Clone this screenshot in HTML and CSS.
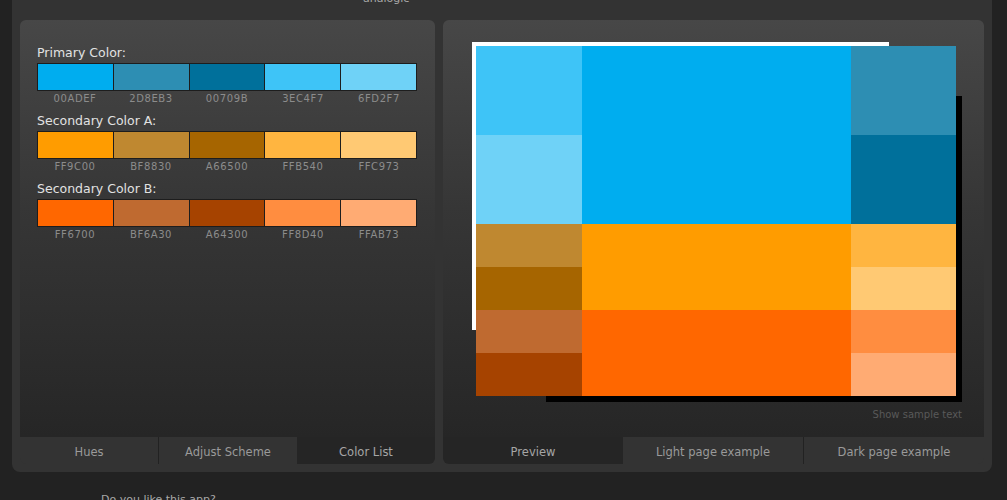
FILE: index.html
```html
<!DOCTYPE html>
<html>
<head>
<meta charset="utf-8">
<title>Color Scheme</title>
<link rel="stylesheet" href="styles.css">
</head>
<body>
<div class="app">
  <div class="top"><span class="scheme-name">analogic</span></div>
  <div class="panels">
    <section class="panel panel-left">
      <div class="panel-body list-body">
        <div class="group">
          <div class="group-label">Primary Color:</div>
          <div class="swatches">
            <div class="sw" style="background:#00ADEF"></div>
            <div class="sw" style="background:#2D8EB3"></div>
            <div class="sw" style="background:#00709B"></div>
            <div class="sw" style="background:#3EC4F7"></div>
            <div class="sw" style="background:#6FD2F7"></div>
          </div>
          <div class="codes"><span>00ADEF</span><span>2D8EB3</span><span>00709B</span><span>3EC4F7</span><span>6FD2F7</span></div>
        </div>
        <div class="group">
          <div class="group-label">Secondary Color A:</div>
          <div class="swatches">
            <div class="sw" style="background:#FF9C00"></div>
            <div class="sw" style="background:#BF8830"></div>
            <div class="sw" style="background:#A66500"></div>
            <div class="sw" style="background:#FFB540"></div>
            <div class="sw" style="background:#FFC973"></div>
          </div>
          <div class="codes"><span>FF9C00</span><span>BF8830</span><span>A66500</span><span>FFB540</span><span>FFC973</span></div>
        </div>
        <div class="group">
          <div class="group-label">Secondary Color B:</div>
          <div class="swatches">
            <div class="sw" style="background:#FF6700"></div>
            <div class="sw" style="background:#BF6A30"></div>
            <div class="sw" style="background:#A64300"></div>
            <div class="sw" style="background:#FF8D40"></div>
            <div class="sw" style="background:#FFAB73"></div>
          </div>
          <div class="codes"><span>FF6700</span><span>BF6A30</span><span>A64300</span><span>FF8D40</span><span>FFAB73</span></div>
        </div>
      </div>
      <div class="tabs">
        <div class="tab">Hues</div>
        <div class="tab tab-sep">Adjust Scheme</div>
        <div class="tab active">Color List</div>
      </div>
    </section>
    <section class="panel panel-right">
      <div class="panel-body preview-body">
        <div class="stage">
          <div class="grid">
            <div style="background:#3EC4F7"></div>
            <div class="big" style="background:#00ADEF"></div>
            <div style="background:#2D8EB3"></div>
            <div style="background:#6FD2F7"></div>
            <div style="background:#00709B"></div>
            <div style="background:#BF8830"></div>
            <div class="big" style="background:#FF9C00"></div>
            <div style="background:#FFB540"></div>
            <div style="background:#A66500"></div>
            <div style="background:#FFC973"></div>
            <div style="background:#BF6A30"></div>
            <div class="big" style="background:#FF6700"></div>
            <div style="background:#FF8D40"></div>
            <div style="background:#A64300"></div>
            <div style="background:#FFAB73"></div>
          </div>
        </div>
        <div class="sample-link">Show sample text</div>
      </div>
      <div class="tabs">
        <div class="tab active">Preview</div>
        <div class="tab">Light page example</div>
        <div class="tab tab-sep">Dark page example</div>
      </div>
    </section>
  </div>
</div>
<p class="footer-q">Do you like this app?</p>
</body>
</html>
```

FILE: styles.css
```css
html, body {
  margin: 0;
  padding: 0;
  background: #222222;
  font-family: "DejaVu Sans", Verdana, sans-serif;
  overflow: hidden;
}

.app {
  width: 964px;
  margin: -20px 0 0 12px;
  padding: 0 8px 8px 8px;
  background: #333333;
  border-radius: 0 0 8px 8px;
}

.top {
  height: 40px;
  box-sizing: border-box;
  padding: 12px 0 0 343px;
  font-size: 11px;
  line-height: 13px;
  color: #a8a8a8;
}

.panels {
  display: flex;
  gap: 8px;
}

.panel {
  display: flex;
  flex-direction: column;
  border-radius: 6px;
  overflow: hidden;
}

.panel-left { width: 415px; }
.panel-right { width: 541px; }

.panel-body {
  height: 417px;
  box-sizing: border-box;
  background: linear-gradient(to bottom, #474747 0%, #363636 45%, #262626 100%);
}

.list-body {
  padding: 25px 18px 0 17px;
}

.group {
  margin-bottom: 7px;
}

.group-label {
  font-size: 12.5px;
  line-height: 16px;
  color: #e2e2e2;
}

.swatches {
  display: flex;
  height: 28px;
  margin-top: 2px;
  border: 1px solid #1d1d1d;
  box-sizing: border-box;
}

.sw {
  flex: 1;
}

.sw + .sw {
  border-left: 1px solid #1d1d1d;
}

.codes {
  display: flex;
  margin-top: 1px;
  font-size: 10px;
  line-height: 14px;
  letter-spacing: 0.6px;
  color: #8c8c8c;
}

.codes span {
  flex: 1;
  text-align: center;
}

.tabs {
  display: flex;
  height: 27px;
  background: #333333;
}

.tab {
  flex: 1;
  box-sizing: border-box;
  height: 27px;
  padding-top: 3px;
  text-align: center;
  font-size: 11.5px;
  line-height: 24px;
  color: #9a9a9a;
}

.tab-sep {
  border-left: 1px solid #222222;
}

.tab.active {
  background: #252525;
  color: #a6a6a6;
}

.preview-body {
  padding: 26px 22px 0 33px;
}

.stage {
  position: relative;
  width: 480px;
  height: 350px;
}

.stage::before {
  content: "";
  position: absolute;
  left: -4px;
  top: -4px;
  width: 417px;
  height: 288px;
  background: #ffffff;
}

.stage::after {
  content: "";
  position: absolute;
  left: 70px;
  top: 50px;
  width: 416px;
  height: 306px;
  background: #000000;
}

.grid {
  position: relative;
  z-index: 1;
  display: grid;
  grid-template-columns: 106px 269px 105px;
  grid-template-rows: 89px 89px 43px 43px 43px 43px;
  width: 480px;
  height: 350px;
}

.grid .big {
  grid-row: span 2;
}

.sample-link {
  margin-top: 12px;
  text-align: right;
  font-size: 10px;
  line-height: 13px;
  color: #595959;
}

.footer-q {
  margin: 21px 0 0 101px;
  font-size: 11px;
  line-height: 13px;
  color: #a8a8a8;
}
```
